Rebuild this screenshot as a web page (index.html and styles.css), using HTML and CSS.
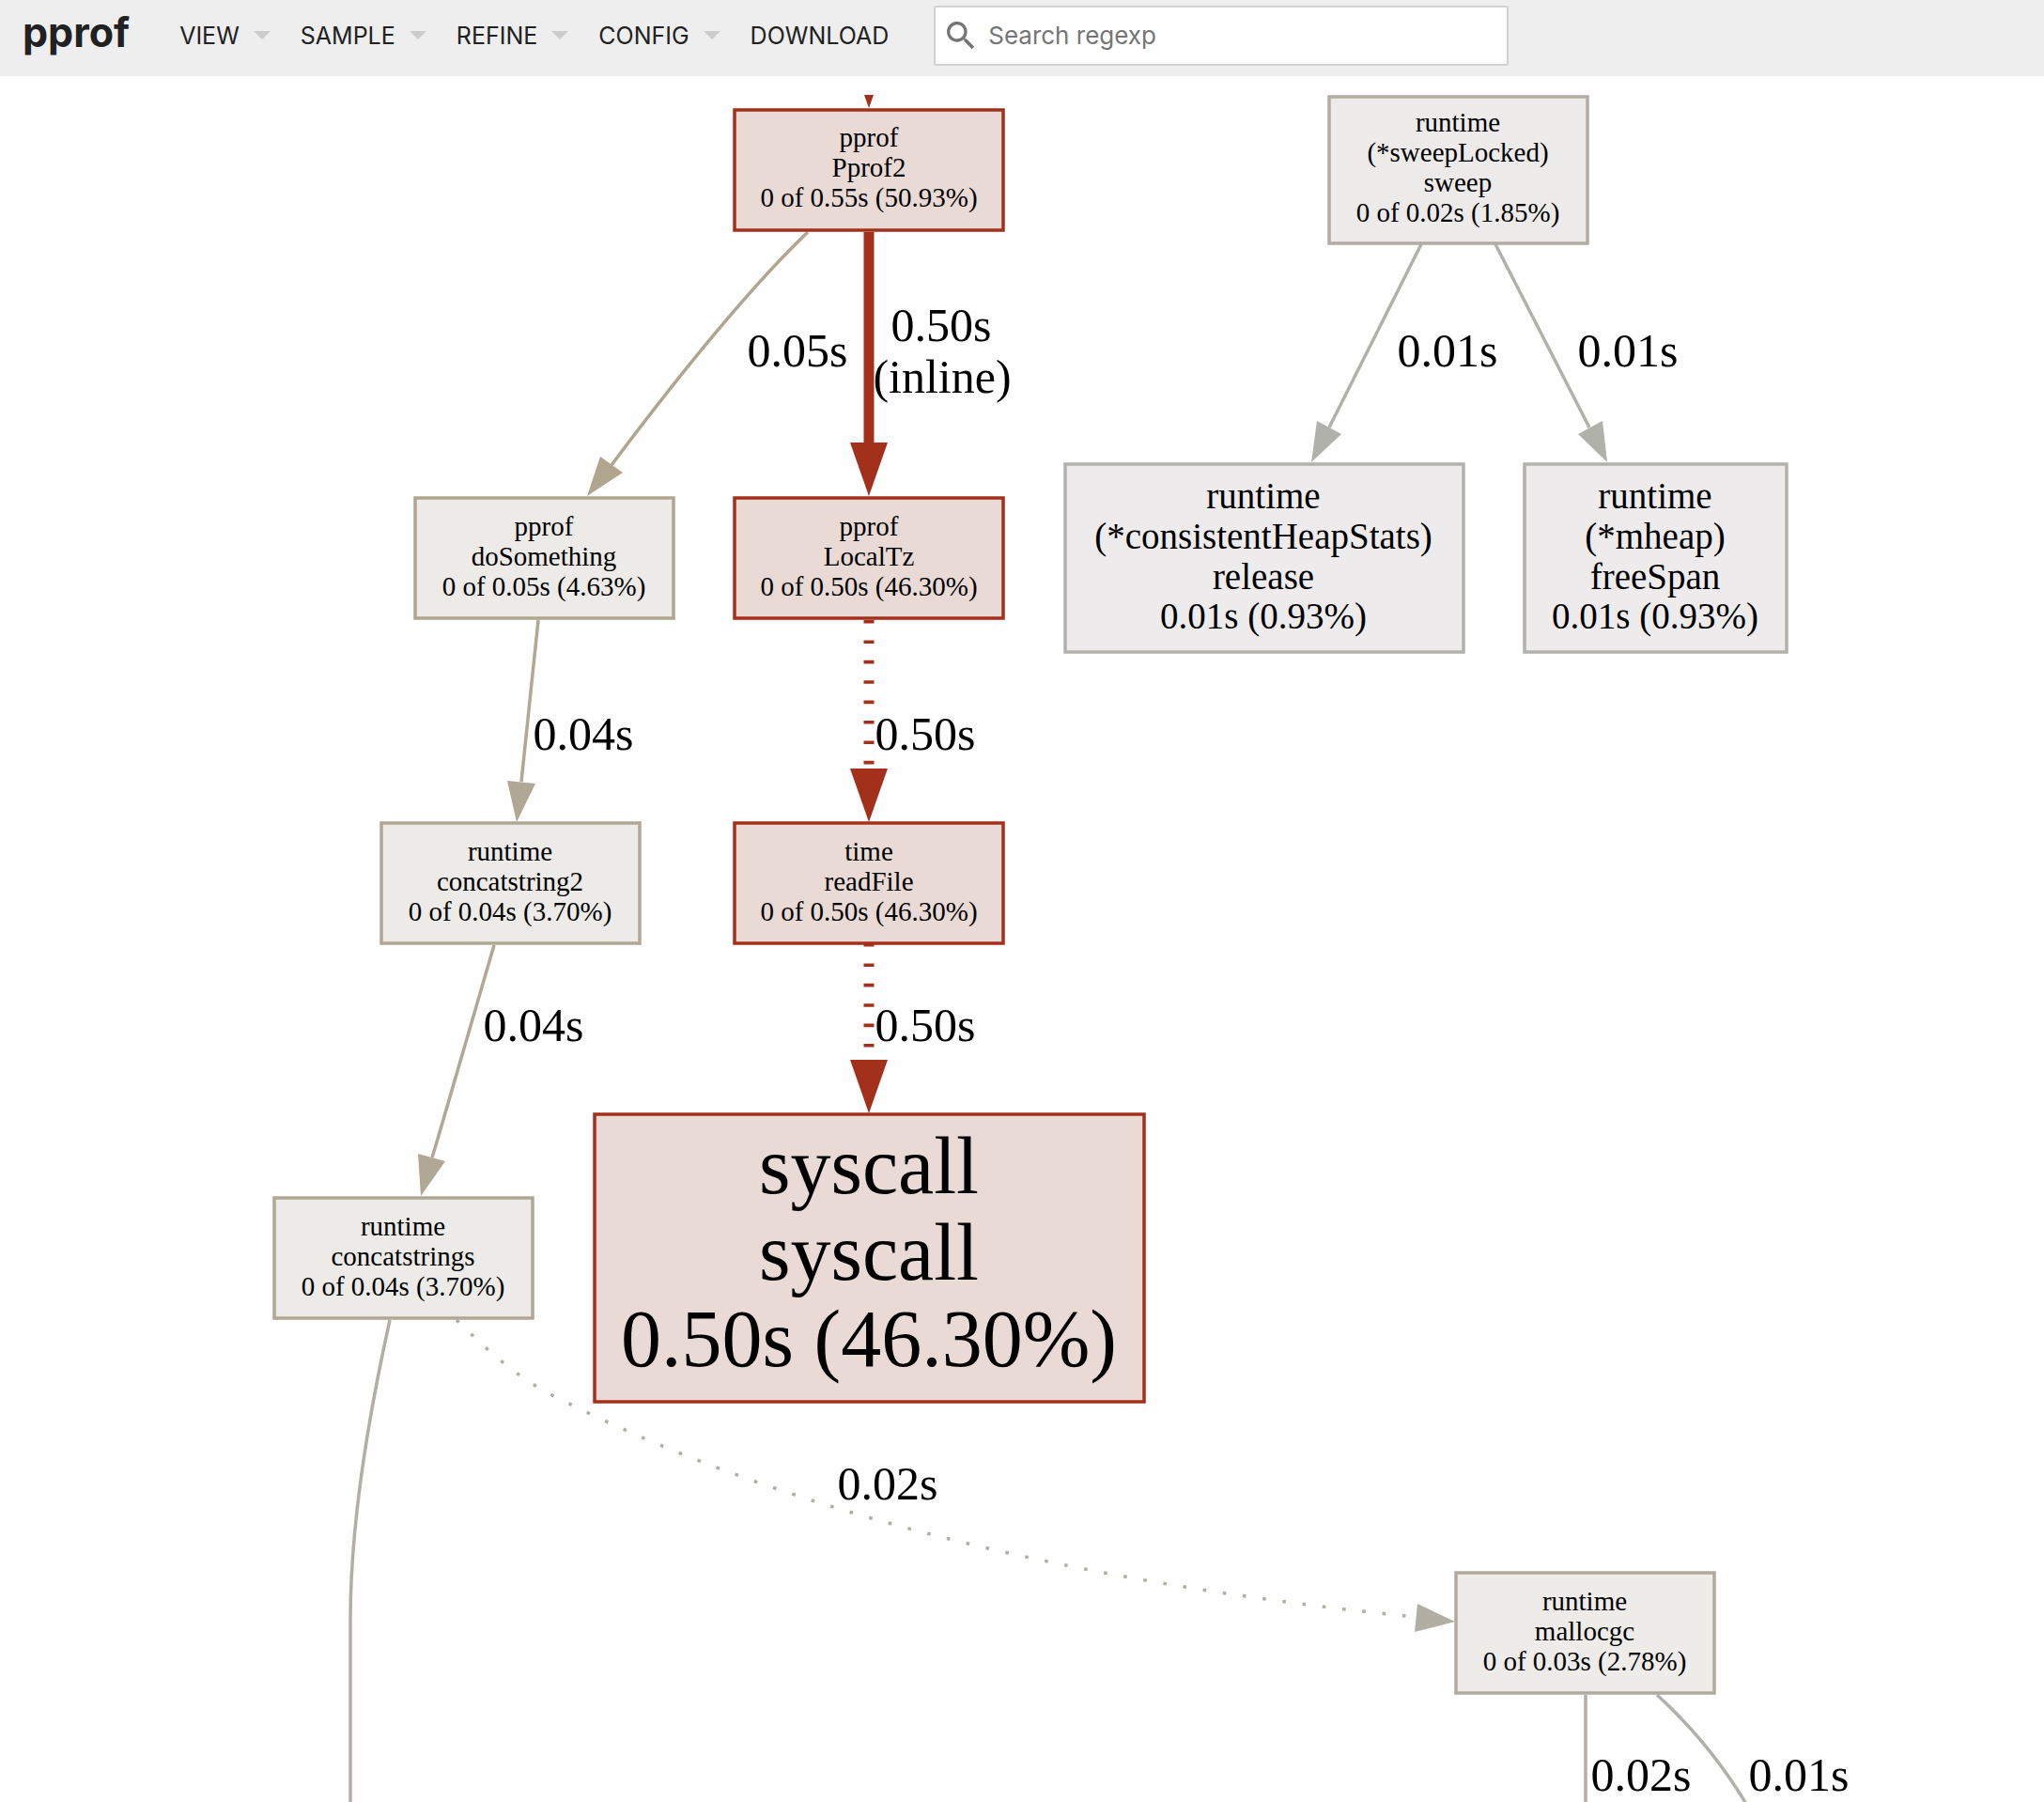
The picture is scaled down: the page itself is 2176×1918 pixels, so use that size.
FILE: index.html
```html
<!DOCTYPE html>
<html lang="en">
<head>
<meta charset="utf-8">
<title>pprof</title>
<link rel="stylesheet" href="styles.css">
</head>
<body>
<header class="header">
  <h1 class="title"><a class="title-link" href="#">pprof</a></h1>
  <nav class="menu" aria-label="Main">
    <button class="menu-item" type="button">VIEW<span class="downarrow"></span></button>
    <button class="menu-item" type="button">SAMPLE<span class="downarrow"></span></button>
    <button class="menu-item" type="button">REFINE<span class="downarrow"></span></button>
    <button class="menu-item" type="button">CONFIG<span class="downarrow"></span></button>
    <a class="menu-item" href="#">DOWNLOAD</a>
  </nav>
  <label class="searchbox">
    <svg class="search-icon" viewBox="3 3 18 18" aria-hidden="true"><path d="M15.500 14h-.79l-.28-.27C15.410 12.590 16 11.110 16 9.500 16 5.910 13.090 3 9.500 3S3 5.910 3 9.500 5.910 16 9.500 16c1.610 0 3.090-.59 4.230-1.570l.27.28v.79l5 4.990L20.490 19l-4.990-5zm-6 0C7.010 14 5 11.990 5 9.500S7.010 5 9.500 5 14 7.010 14 9.500 11.990 14 9.500 14z"/></svg>
    <input class="search" type="text" placeholder="Search regexp" aria-label="Search regexp">
  </label>
</header>

<main class="graph">
<svg class="graph-svg" role="img" aria-label="Call graph">
  <!-- edges -->
  <g class="edge e50"><polygon points="920,1 930,1 925,15"/></g>
  <g class="edge e05"><path d="M860 147C790 214 711 315 651 395"/><polygon points="639,386 663,403 625,428"/></g>
  <g class="edge e50"><path class="thick" d="M925 147V372"/><polygon points="905,371 945,371 925,428"/></g>
  <g class="edge e50"><path class="thick dotted" d="M925 560V717"/><polygon points="905,718 945,718 925,775"/></g>
  <g class="edge e50"><path class="thick dotted" d="M925 904V1027"/><polygon points="905,1028 945,1028 925,1085"/></g>
  <g class="edge e04"><path d="M573 560L555 732"/><polygon points="540,731 570,734 550,775"/></g>
  <g class="edge e04"><path d="M526 906C508 970 484 1052 460 1132"/><polygon points="445,1128 474,1136 448,1173"/></g>
  <g class="edge e02"><path d="M415 1305C395 1395 373 1513 373 1624V1900"/></g>
  <g class="edge e02"><path class="dotted" d="M486 1305C519 1337 552 1369 600 1391C870 1527 1207 1591 1507 1621"/><polygon points="1509,1607 1506,1637 1549,1626"/></g>
  <g class="edge e01"><path d="M1513 160L1415 355"/><polygon points="1402,348 1428,362 1396,392"/></g>
  <g class="edge e01"><path d="M1592 160L1692 355"/><polygon points="1706,348 1680,362 1711,392"/></g>
  <g class="edge e02"><path d="M1688 1704V1900"/></g>
  <g class="edge e01"><path d="M1764 1704C1800 1737 1832 1774 1862 1825"/></g>

  <!-- edge labels -->
  <g class="label">
    <text x="849" y="290">0.05s</text>
    <text x="1002" y="263">0.50s</text>
    <text x="1003" y="318">(inline)</text>
    <text x="1541" y="290">0.01s</text>
    <text x="1733" y="290">0.01s</text>
    <text x="621" y="698">0.04s</text>
    <text x="985" y="698">0.50s</text>
    <text x="568" y="1008">0.04s</text>
    <text x="985" y="1008">0.50s</text>
    <text x="945" y="1496">0.02s</text>
    <text x="1747" y="1806">0.02s</text>
    <text x="1915" y="1806">0.01s</text>
  </g>

  <!-- nodes -->
  <g class="node n50">
    <rect x="782" y="17" width="286" height="128"/>
    <text x="925" y="56">pprof</text><text x="925" y="88">Pprof2</text><text x="925" y="120">0 of 0.55s (50.93%)</text>
  </g>
  <g class="node n50">
    <rect x="782" y="430" width="286" height="128"/>
    <text x="925" y="470">pprof</text><text x="925" y="502">LocalTz</text><text x="925" y="534">0 of 0.50s (46.30%)</text>
  </g>
  <g class="node n50">
    <rect x="782" y="776" width="286" height="128"/>
    <text x="925" y="816">time</text><text x="925" y="848">readFile</text><text x="925" y="880">0 of 0.50s (46.30%)</text>
  </g>
  <g class="node n50 size-xl">
    <rect x="633" y="1086" width="585" height="306"/>
    <text x="925" y="1170">syscall</text><text x="925" y="1262">syscall</text><text x="925" y="1354">0.50s (46.30%)</text>
  </g>
  <g class="node n05">
    <rect x="442" y="430" width="275" height="128"/>
    <text x="579" y="470">pprof</text><text x="579" y="502">doSomething</text><text x="579" y="534">0 of 0.05s (4.63%)</text>
  </g>
  <g class="node n04">
    <rect x="406" y="776" width="275" height="128"/>
    <text x="543" y="816">runtime</text><text x="543" y="848">concatstring2</text><text x="543" y="880">0 of 0.04s (3.70%)</text>
  </g>
  <g class="node n04">
    <rect x="292" y="1175" width="275" height="128"/>
    <text x="429" y="1215">runtime</text><text x="429" y="1247">concatstrings</text><text x="429" y="1279">0 of 0.04s (3.70%)</text>
  </g>
  <g class="node n02">
    <rect x="1415" y="3" width="275" height="156"/>
    <text x="1552" y="40">runtime</text><text x="1552" y="72">(*sweepLocked)</text><text x="1552" y="104">sweep</text><text x="1552" y="136">0 of 0.02s (1.85%)</text>
  </g>
  <g class="node n01 size-m">
    <rect x="1134" y="394" width="424" height="200"/>
    <text x="1345" y="441">runtime</text><text x="1345" y="484">(*consistentHeapStats)</text><text x="1345" y="527">release</text><text x="1345" y="569">0.01s (0.93%)</text>
  </g>
  <g class="node n01 size-m">
    <rect x="1623" y="394" width="279" height="200"/>
    <text x="1762" y="441">runtime</text><text x="1762" y="484">(*mheap)</text><text x="1762" y="527">freeSpan</text><text x="1762" y="569">0.01s (0.93%)</text>
  </g>
  <g class="node n03">
    <rect x="1550" y="1574" width="275" height="128"/>
    <text x="1687" y="1614">runtime</text><text x="1687" y="1646">mallocgc</text><text x="1687" y="1678">0 of 0.03s (2.78%)</text>
  </g>
</svg>
</main>
</body>
</html>
```
FILE: styles.css
```css
* { box-sizing: border-box; }

body {
  margin: 0;
  height: 100vh;
  display: flex;
  flex-direction: column;
  overflow: hidden;
  background: #fefefe;
  color: #212121;
  font-family: Inter, "Liberation Sans", sans-serif;
}

/* toolbar */
.header {
  display: flex;
  align-items: center;
  flex: none;
  height: 81px;
  padding: 0 24px 6px;
  background: #eeeeee;
}
.title {
  margin: 0 37px 8px 0;
  font-size: 43px;
  line-height: 48px;
  font-weight: 700;
}
.title-link { color: inherit; text-decoration: none; }
.menu { display: flex; align-items: center; }
.menu-item {
  display: flex;
  align-items: center;
  gap: 15px;
  margin: 0;
  padding: 0 16px;
  border: 0;
  background: none;
  color: #212121;
  font: 400 25px/32px Inter, "Liberation Sans", sans-serif;
  text-decoration: none;
}
.downarrow {
  border: 9px solid transparent;
  border-top-color: #cccccc;
  border-bottom: 0;
}
.searchbox {
  display: flex;
  align-items: center;
  gap: 14px;
  width: 612px;
  height: 64px;
  margin-left: 32px;
  padding: 0 12px;
  border: 2px solid #d1d2d3;
  border-radius: 3px;
  background: #ffffff;
}
.search-icon { flex: none; width: 30px; height: 30px; fill: #757575; }
.search {
  flex: 1;
  min-width: 0;
  padding: 0;
  border: 0;
  outline: 0;
  background: none;
  color: #212121;
  font: 400 26px/32px Inter, "Liberation Sans", sans-serif;
}
.search::placeholder { color: #757575; opacity: 1; }

/* call graph canvas */
.graph {
  flex: 1;
  min-height: 0;
  display: flex;
  padding-top: 19px;
}
.graph-svg {
  flex: 1;
  min-width: 0;
  font-family: "Liberation Serif", "Times New Roman", serif;
  text-anchor: middle;
}

.edge path { fill: none; stroke: currentColor; stroke-width: 3.5; }
.edge polygon { fill: currentColor; }
.edge .thick { stroke-width: 11; }
.edge .dotted { stroke-dasharray: 3.6 17.8; }
.e50 { color: #a2301a; }
.e05 { color: #b0a58e; }
.e04 { color: #b1a795; }
.e02 { color: #b1aea4; }
.e01 { color: #b1b1ab; }

.label text { font-size: 50px; fill: #000000; }

.node rect { stroke-width: 3.5; }
.node text { font-size: 29px; fill: #000000; }
.size-m text { font-size: 39px; }
.size-xl text { font-size: 86px; }
.n50 rect { fill: #eadad6; stroke: #a2301a; }
.n05 rect { fill: #ecebe7; stroke: #b0a58e; }
.n04 rect { fill: #ecebe7; stroke: #b1a795; }
.n03 rect { fill: #edece9; stroke: #b1aa9e; }
.n02 rect { fill: #edebea; stroke: #b1ada3; }
.n01 rect { fill: #edebec; stroke: #b1b1ad; }
```
